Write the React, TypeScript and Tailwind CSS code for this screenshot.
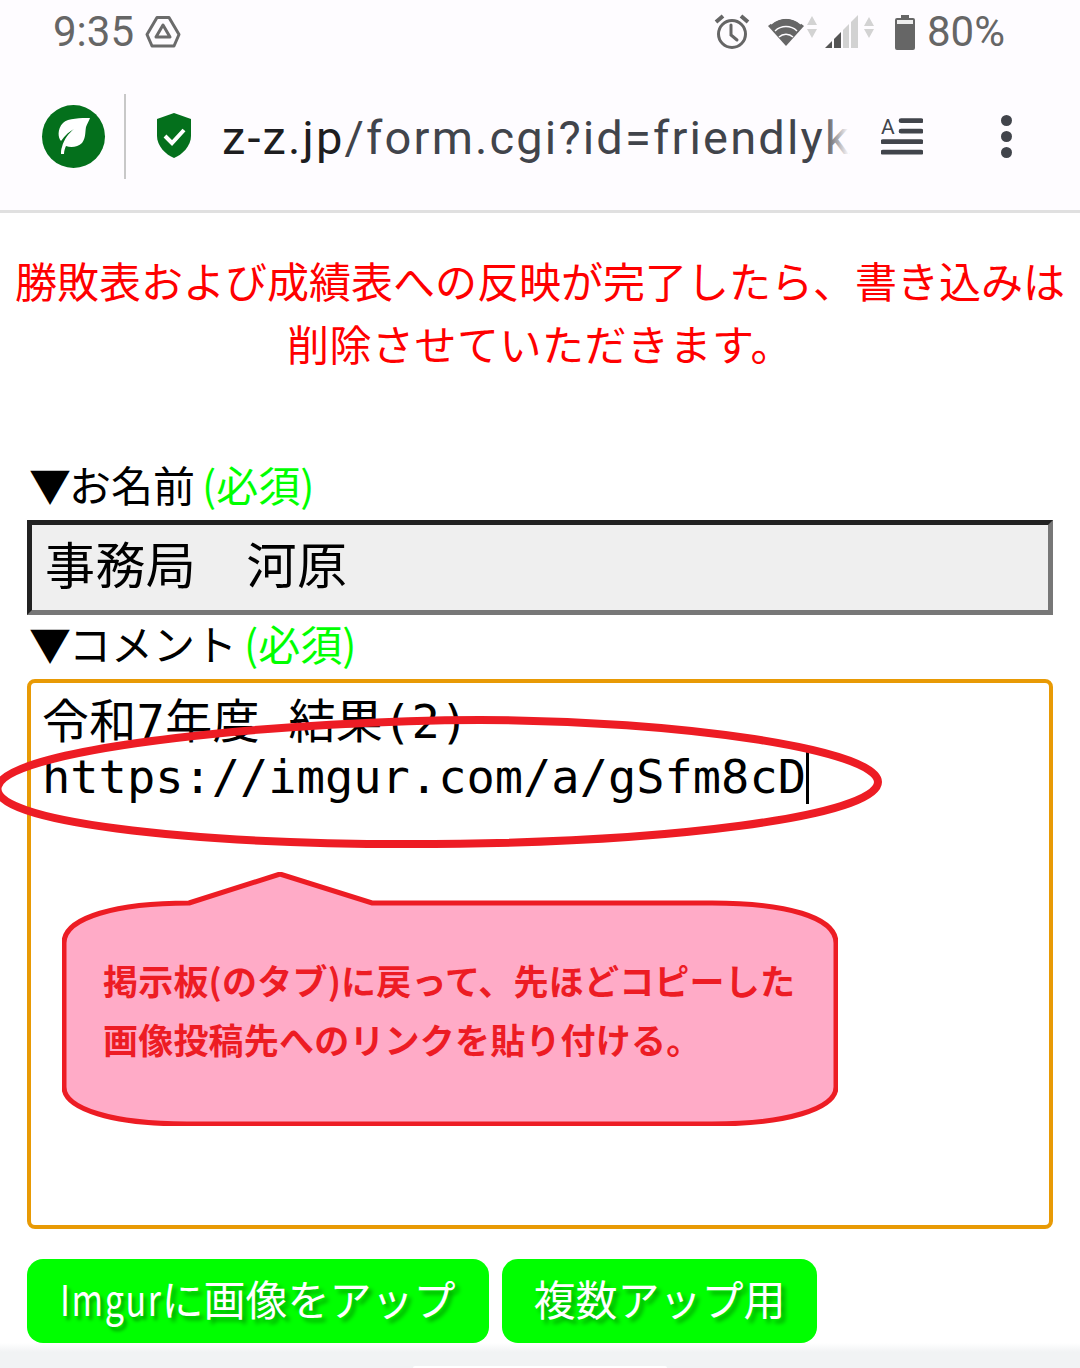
import React from "react";

const jp = "font-['Noto_Sans_CJK_JP','Noto_Sans',sans-serif]";

function StatusBar() {
  return (
    <div className="flex h-[67px] items-center justify-between pb-[3px] pl-[53px] pr-[75px] text-[#666] font-['Roboto',sans-serif] text-[42px]">
      <div className="flex items-center gap-[11px]">
        <span className="leading-none">9:35</span>
        <svg width="36" height="34" viewBox="0 0 36 34" fill="none" stroke="#6b6b6b" strokeWidth="3" strokeLinejoin="round">
          <path d="M12 2.500h12l10 17-5 11.500H7l-5-11.500z" />
          <path d="M18 10l7 12H11z" strokeWidth="3" />
        </svg>
      </div>
      <div className="flex items-center">
        <svg width="36" height="36" viewBox="0 0 36 36" fill="none" stroke="#666" strokeWidth="3" className="mr-[17px]">
          <circle cx="18" cy="20" r="13.500" />
          <path d="M17 11v10l6 5" strokeLinecap="round" />
          <path d="M2 8l7-6M34 8l-7-6" strokeWidth="4" />
        </svg>
        <svg width="52" height="34" viewBox="0 0 52 34" className="mr-[6px]">
          <path d="M19 31L1 11a26 26 0 0 1 36 0z" fill="#666" />
          <path d="M4 9a22 22 0 0 1 30 0M8 16a16 16 0 0 1 22 0M12 22a10 10 0 0 1 14 0" stroke="#fefcff" strokeWidth="1.500" fill="none" />
          <path d="M45 1l5 9H40zM40 14h10l-5 9z" fill="#d3d3d3" />
        </svg>
        <svg width="50" height="34" viewBox="0 0 50 34" className="mr-[20px]">
          <path d="M0 33L7 26v7z" fill="#555" />
          <path d="M9 33V24l7-7v16z" fill="#555" />
          <path d="M18 33V15l6-6v24z" fill="#d2d2d2" />
          <path d="M26 33V7l7-7v33z" fill="#d2d2d2" />
          <path d="M44 2l5 9h-10zM39 14h10l-5 9z" fill="#d3d3d3" />
        </svg>
        <svg width="20" height="35" viewBox="0 0 20 35" className="mr-[12px]">
          <path d="M6 0h8v3h4a2 2 0 0 1 2 2v28a2 2 0 0 1-2 2H2a2 2 0 0 1-2-2V5a2 2 0 0 1 2-2h4z" fill="#666" />
          <rect x="2" y="5" width="16" height="4" fill="#eee" />
        </svg>
        <span className="leading-none">80%</span>
      </div>
    </div>
  );
}

function UrlBar() {
  return (
    <div className="flex h-[146px] items-center border-b-[3px] border-[#e0e0e0] pb-[5px]">
      <div className="ml-[42px] flex h-[63px] w-[63px] items-center justify-center rounded-full bg-[#04701c]">
        <svg width="36" height="40" viewBox="0 0 36 40">
          <path d="M34 2c-9 0-22 0-27 5C1 13 2 22 5 25c4-6 9-10 13-12-5 4-10 10-12 18-1 2-1 5-1 7l3 0c0-3 1-6 2-8 5 2 12 1 16-3 4-5 3-11 4-16 1-3 3-6 4-9z" fill="#fff" />
        </svg>
      </div>
      <div className="ml-[19px] h-[85px] w-[2px] bg-[#c8c8c8]" />
      <svg width="36" height="46" viewBox="0 0 36 46" className="ml-[30px]">
        <path d="M18 0l17 6v17c0 10-9 19-17 22C10 42 1 33 1 23V6z" fill="#04701c" />
        <path d="M9 23l7 7 12-13" stroke="#fff" strokeWidth="4" fill="none" />
      </svg>
      <div className="relative ml-[30px] mt-[4px] w-[627px] whitespace-nowrap font-['Roboto',sans-serif] text-[47px] leading-[60px] tracking-[2.15px] text-[#41444b]">
        <span className="text-[#1d1d20]">z-z.jp</span>/form.cgi?id=friendlyk
        <div className="absolute right-0 top-0 h-full w-[26px] bg-gradient-to-r from-transparent to-[#fefcff]" />
      </div>
      <svg width="42" height="40" viewBox="0 0 44 40" className="ml-[32px]">
        <text x="0" y="18" fontSize="22" fontFamily="Roboto" fill="#41444b">A</text>
        <path d="M21 4h21M21 15h21M2 26h40M2 37h40" stroke="#41444b" strokeWidth="5" strokeLinecap="round" />
      </svg>
      <div className="ml-[78px] flex flex-col gap-[5px]">
        <div className="h-[11px] w-[11px] rounded-full bg-[#41444b]" />
        <div className="h-[11px] w-[11px] rounded-full bg-[#41444b]" />
        <div className="h-[11px] w-[11px] rounded-full bg-[#41444b]" />
      </div>
    </div>
  );
}

function Req() {
  return <span className="ml-[7px] text-[#00ff00]">(必須)</span>;
}

export default function App() {
  return (
    <div className={`relative h-[1368px] w-[1080px] overflow-hidden bg-white text-black ${jp}`}>
      <div className="bg-[#fefcff]">
        <StatusBar />
        <UrlBar />
      </div>
      <p className="mt-[36px] text-center text-[42px] leading-[62px] text-[#ff0000]">
        勝敗表および成績表への反映が完了したら、書き込みは<br />
        <span className="relative top-[1px] tracking-[0.5px]">削除させていただきます。</span>
      </p>
      <div className="mt-[81px] px-[27px]">
        <div className="pl-[2px] text-[42px] leading-[60px]">▼<span className="-ml-[2px]">お名前</span><Req /></div>
        <div className="mt-[6px] flex h-[95px] items-center border-[5px] border-t-[#222] border-l-[#222] border-r-[#777] border-b-[#777] bg-[#efefef] pb-[12px] pl-[13px] text-[50px] leading-none tracking-[0.4px]">
          事務局　河原
        </div>
        <div className="-mt-[2px] pl-[2px] text-[42px] leading-[60px]">▼<span className="-ml-[2px]">コメント</span><Req /></div>
        <div className="mt-[6px] h-[550px] rounded-[8px] border-[4px] border-[#e89a05] pl-[11px] pt-[11px] font-['DejaVu_Sans_Mono','Noto_Sans_CJK_JP',monospace] text-[47px] leading-[56px]">
          <div className="tracking-[0.3px]">令和7年度 結果(2)</div>
          <div className="flex -translate-y-[1px]">https://imgur.com/a/gSfm8cD<span className="h-[55px] w-[3px] bg-black" /></div>
        </div>
        <div className="mt-[30px] flex gap-[13px] text-[42px] text-white [text-shadow:4px_4px_4px_rgba(0,0,0,0.35)]">
          <div className="flex h-[84px] w-[462px] items-center justify-center rounded-[16px] bg-[#00ff00] pb-[8px]">
            <span className="inline-block w-[101px] origin-left scale-x-[0.81] tracking-[2px]">Imgur</span>
            <span>に画像をアップ</span>
          </div>
          <div className="flex h-[84px] w-[315px] items-center justify-center rounded-[16px] bg-[#00ff00] pb-[8px]">複数アップ用</div>
        </div>
      </div>

      <svg width="900" height="200" viewBox="0 0 900 200" className="absolute left-0 top-[700px]" fill="none">
        <path d="M-2 86C10 46 300 20 480 20c200 0 398 30 398 62 0 34-210 62-470 62C190 144-14 122-2 86z" stroke="#ed1c24" strokeWidth="8" />
      </svg>

      <div className="absolute left-[62px] top-[872px] h-[254px] w-[776px]">
        <svg width="776" height="254" viewBox="0 0 776 254" className="absolute inset-0">
          <path d="M127 31L218 2l92 29h340c74 0 124 14 124 40v144c0 22-50 37-124 37H125c-74 0-123-15-123-37V71c0-26 54-40 125-40z" fill="#ffabc7" stroke="#ed1c24" strokeWidth="5" />
        </svg>
        <div className="absolute left-[41px] top-[78px] whitespace-nowrap text-[35px] font-bold leading-[59px] tracking-[0.2px] text-[#ed1c24]">
          掲示板(のタブ)に戻って、先ほどコピーした<br />画像投稿先へのリンクを貼り付ける。
        </div>
      </div>

      <div className="absolute bottom-0 left-0 flex h-[25px] w-full flex-col items-center bg-[#f1f3f4]">
        <div className="h-[9px] w-full bg-gradient-to-b from-white to-[#f1f3f4]" />
        <div className="mt-[14px] h-[2px] w-[254px] rounded-t-full bg-white" />
      </div>
    </div>
  );
}
